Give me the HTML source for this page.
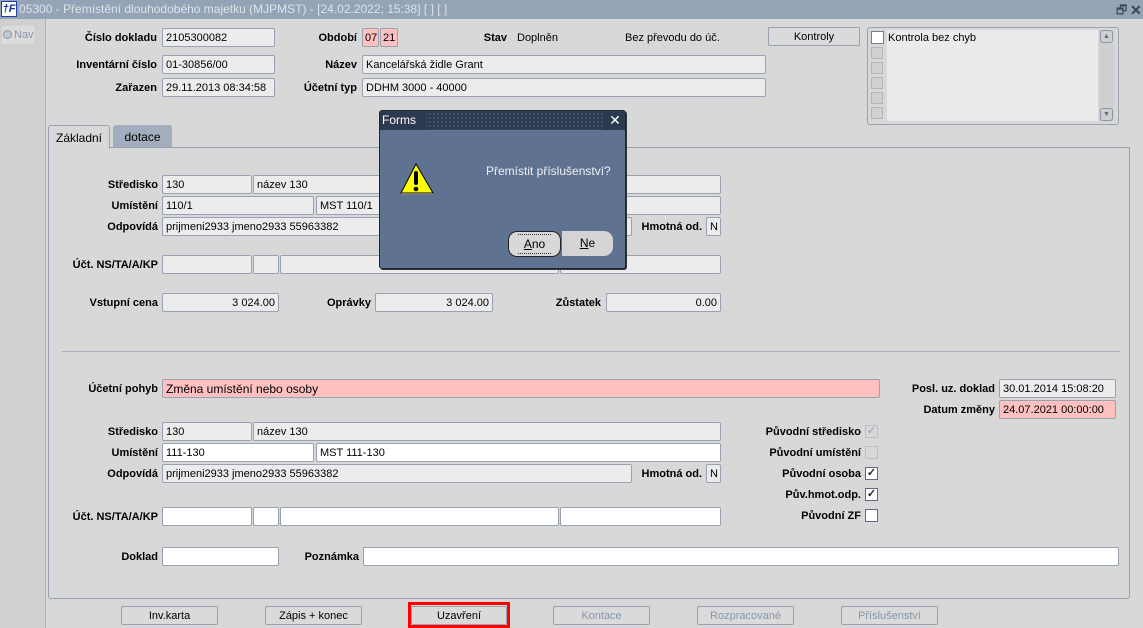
<!DOCTYPE html>
<html><head><meta charset="utf-8">
<style>
*{box-sizing:border-box;margin:0;padding:0}
body{width:1143px;height:628px;overflow:hidden;background:#d8d8d8;font-family:"Liberation Sans",Arial,sans-serif;font-size:11px;color:#000;position:relative}
.a{position:absolute}
.t{position:absolute;height:19px;line-height:20px;white-space:nowrap}
.l{position:absolute;font-weight:bold;font-size:11px;text-align:right;white-space:nowrap;line-height:21px;height:19px}
.f{position:absolute;height:19px;border:1px solid #98a2b0;border-radius:2px;background:#ececec;line-height:18px;padding-left:3px;font-size:11px;white-space:nowrap;overflow:hidden}
.w{background:#fff}
.p{background:#ffc0c0}
.r{text-align:right;padding-right:3px}
.b{position:absolute;height:19px;border:1px solid #98a2b0;border-radius:2px;background:#dadada;text-align:center;line-height:18px;font-size:11px}
.d{color:#8896a8}
.cb{position:absolute;width:13px;height:13px;border:1px solid #5c6b80;background:#fff;font-size:11px;line-height:11px;text-align:center;font-weight:bold}
</style></head><body>
<div class="a" style="left:0;top:0;width:1143px;height:19px;background:#94a3b5"></div>
<div class="a" style="left:1px;top:1px;width:16px;height:16px;background:#fff;border:1px solid #2040a0;color:#1030a0;font-weight:bold;font-style:italic;font-size:11px;line-height:14px;text-align:center">†F</div>
<div class="t" style="left:19px;top:0;color:#dde3ea;font-size:12px;line-height:19px">05300 - Přemístění dlouhodobého majetku (MJPMST) - [24.02.2022; 15:38]  [ ]  [ ]</div>
<div class="t" style="left:1116px;top:0;color:#3a4658;font-size:12px">🗗</div>
<div class="t" style="left:1130px;top:0;color:#3a4658;font-size:14px;font-weight:bold">✕</div>
<div class="a" style="left:0;top:19px;width:46px;height:609px;background:#d0d0d0;border-right:1px solid #a8b0bc"></div>
<div class="a" style="left:2px;top:26px;width:32px;height:18px;background:#dcdcdc"></div>
<div class="a" style="left:3px;top:30px;width:9px;height:9px;border:1px solid #8896a8;border-radius:50%;background:#c0c8d2"></div>
<div class="t" style="left:14px;top:26px;color:#8896a8;font-size:11px;line-height:18px">Nav</div>

<div class="l" style="right:986px;top:28px">Číslo dokladu</div>
<div class="f" style="left:162px;top:28px;width:113px">2105300082</div>
<div class="l" style="right:986px;top:55px">Inventární číslo</div>
<div class="f" style="left:162px;top:55px;width:113px">01-30856/00</div>
<div class="l" style="right:986px;top:78px">Zařazen</div>
<div class="f" style="left:162px;top:78px;width:113px">29.11.2013 08:34:58</div>
<div class="l" style="right:786px;top:28px">Období</div>
<div class="f p" style="left:362px;top:28px;width:17px;padding-left:2px">07</div>
<div class="f p" style="left:380px;top:28px;width:18px;padding-left:2px">21</div>
<div class="l" style="right:636px;top:28px">Stav</div>
<div class="t" style="left:517px;top:28px">Doplněn</div>
<div class="t" style="left:625px;top:28px">Bez převodu do úč.</div>
<div class="b" style="left:768px;top:27px;width:92px">Kontroly</div>
<div class="l" style="right:786px;top:55px">Název</div>
<div class="f" style="left:362px;top:55px;width:404px">Kancelářská židle Grant</div>
<div class="l" style="right:786px;top:78px">Účetní typ</div>
<div class="f" style="left:362px;top:78px;width:404px">DDHM 3000 - 40000</div>
<div class="a" style="left:867px;top:27px;width:252px;height:98px;border:1px solid #98a2b0;border-radius:3px;background:#d8d8d8"></div>
<div class="a" style="left:887px;top:30px;width:211px;height:91px;background:#ebebeb"></div>
<div class="cb" style="left:871px;top:31px;border-color:#6f7e94"></div>
<div class="t" style="left:888px;top:29px;line-height:18px">Kontrola bez chyb</div>
<div class="a" style="left:871px;top:47px;width:12px;height:12px;border:1px solid #aeb6c0;background:#d0d0d0"></div>
<div class="a" style="left:871px;top:62px;width:12px;height:12px;border:1px solid #aeb6c0;background:#d0d0d0"></div>
<div class="a" style="left:871px;top:77px;width:12px;height:12px;border:1px solid #aeb6c0;background:#d0d0d0"></div>
<div class="a" style="left:871px;top:92px;width:12px;height:12px;border:1px solid #aeb6c0;background:#d0d0d0"></div>
<div class="a" style="left:871px;top:107px;width:12px;height:12px;border:1px solid #aeb6c0;background:#d0d0d0"></div>
<div class="a" style="left:1099px;top:30px;width:15px;height:91px;background:#cfcfcf"></div>
<div class="a" style="left:1100px;top:30px;width:13px;height:13px;border:1px solid #8896a8;border-radius:3px;font-size:7px;text-align:center;line-height:11px;color:#5c6b80">▲</div>
<div class="a" style="left:1100px;top:108px;width:13px;height:13px;border:1px solid #8896a8;border-radius:3px;font-size:7px;text-align:center;line-height:11px;color:#5c6b80">▼</div>

<div class="a" style="left:48px;top:147px;width:1082px;height:452px;border:1px solid #98a2b0;border-radius:0 0 3px 3px"></div>
<div class="a" style="left:48px;top:125px;width:62px;height:24px;border:1px solid #98a2b0;border-bottom:none;border-radius:3px 3px 0 0;background:#d8d8d8;font-size:12px;line-height:24px;text-align:center">Základní</div>
<div class="a" style="left:113px;top:125px;width:59px;height:22px;border-radius:3px 3px 0 0;background:#a2adbd;font-size:12px;line-height:24px;text-align:center">dotace</div>
<div class="a" style="left:49px;top:147px;width:60px;height:2px;background:#d8d8d8"></div>

<div class="l" style="right:985px;top:175px">Středisko</div>
<div class="f" style="left:162px;top:175px;width:90px">130</div>
<div class="f" style="left:253px;top:175px;width:468px">název 130</div>
<div class="l" style="right:985px;top:196px">Umístění</div>
<div class="f" style="left:162px;top:196px;width:152px">110/1</div>
<div class="f" style="left:316px;top:196px;width:405px">MST 110/1</div>
<div class="l" style="right:985px;top:217px">Odpovídá</div>
<div class="f" style="left:162px;top:217px;width:470px">prijmeni2933 jmeno2933 55963382</div>
<div class="l" style="right:441px;top:217px">Hmotná od.</div>
<div class="f" style="left:706px;top:217px;width:15px;padding-left:3px">N</div>
<div class="l" style="right:985px;top:255px">Účt. NS/TA/A/KP</div>
<div class="f" style="left:162px;top:255px;width:90px"></div>
<div class="f" style="left:253px;top:255px;width:26px"></div>
<div class="f" style="left:280px;top:255px;width:279px"></div>
<div class="f" style="left:560px;top:255px;width:161px"></div>
<div class="l" style="right:985px;top:293px">Vstupní cena</div>
<div class="f r" style="left:162px;top:293px;width:117px">3 024.00</div>
<div class="l" style="right:772px;top:293px">Oprávky</div>
<div class="f r" style="left:375px;top:293px;width:118px">3 024.00</div>
<div class="l" style="right:542px;top:293px">Zůstatek</div>
<div class="f r" style="left:606px;top:293px;width:115px">0.00</div>
<div class="a" style="left:62px;top:351px;width:1058px;height:1px;background:#a8b0bc"></div>

<div class="l" style="right:985px;top:379px">Účetní pohyb</div>
<div class="f p" style="left:162px;top:379px;width:718px;font-size:12px">Změna umístění nebo osoby</div>
<div class="l" style="right:148px;top:379px">Posl. uz. doklad</div>
<div class="f" style="left:999px;top:379px;width:117px">30.01.2014 15:08:20</div>
<div class="l" style="right:148px;top:400px">Datum změny</div>
<div class="f p" style="left:999px;top:400px;width:117px">24.07.2021 00:00:00</div>
<div class="l" style="right:985px;top:422px">Středisko</div>
<div class="f" style="left:162px;top:422px;width:90px">130</div>
<div class="f" style="left:253px;top:422px;width:468px">název 130</div>
<div class="l" style="right:985px;top:443px">Umístění</div>
<div class="f w" style="left:162px;top:443px;width:152px">111-130</div>
<div class="f w" style="left:316px;top:443px;width:405px">MST 111-130</div>
<div class="l" style="right:985px;top:464px">Odpovídá</div>
<div class="f" style="left:162px;top:464px;width:470px">prijmeni2933 jmeno2933 55963382</div>
<div class="l" style="right:441px;top:464px">Hmotná od.</div>
<div class="f" style="left:706px;top:464px;width:15px;padding-left:3px">N</div>
<div class="l" style="right:985px;top:507px">Účt. NS/TA/A/KP</div>
<div class="f w" style="left:162px;top:507px;width:90px"></div>
<div class="f w" style="left:253px;top:507px;width:26px"></div>
<div class="f w" style="left:280px;top:507px;width:279px"></div>
<div class="f w" style="left:560px;top:507px;width:161px"></div>
<div class="l" style="right:985px;top:547px">Doklad</div>
<div class="f w" style="left:162px;top:547px;width:117px"></div>
<div class="l" style="right:784px;top:547px">Poznámka</div>
<div class="f w" style="left:363px;top:547px;width:756px"></div>

<div class="l" style="right:282px;top:422px">Původní středisko</div>
<div class="cb" style="left:865px;top:425px;border-color:#b8c0ca;background:#d8d8d8;color:#a8b0bc">✓</div>
<div class="l" style="right:282px;top:443px">Původní umístění</div>
<div class="cb" style="left:865px;top:446px;border-color:#b8c0ca;background:#d8d8d8"></div>
<div class="l" style="right:282px;top:464px">Původní osoba</div>
<div class="cb" style="left:865px;top:467px;color:#222">✓</div>
<div class="l" style="right:282px;top:485px">Pův.hmot.odp.</div>
<div class="cb" style="left:865px;top:488px;color:#222">✓</div>
<div class="l" style="right:282px;top:506px">Původní ZF</div>
<div class="cb" style="left:865px;top:509px"></div>

<div class="b" style="left:121px;top:606px;width:97px">Inv.karta</div>
<div class="b" style="left:265px;top:606px;width:97px">Zápis + konec</div>
<div class="a" style="left:408px;top:602px;width:102px;height:26px;border:3px solid #f00"></div>
<div class="b" style="left:411px;top:606px;width:96px">Uzavření</div>
<div class="b d" style="left:553px;top:606px;width:97px">Kontace</div>
<div class="b d" style="left:697px;top:606px;width:97px">Rozpracované</div>
<div class="b d" style="left:841px;top:606px;width:97px">Příslušenství</div>

<div class="a" style="left:379px;top:110px;width:247px;height:159px;background:#5f7291;border:1px solid #1e2835;border-radius:3px;box-shadow:1px 1px 0 #333"></div>
<div class="a" style="left:380px;top:111px;width:245px;height:19px;background:#2c3a50;background-image:radial-gradient(#7f8ca0 0.6px,transparent 0.8px);background-size:4px 4px;background-position:0 1px"></div>
<div class="a" style="left:380px;top:111px;width:46px;height:19px;background:#2c3a50;color:#fff;font-size:12px;line-height:19px;padding-left:2px">Forms</div>
<div class="a" style="left:605px;top:111px;width:20px;height:19px;background:#2c3a50;color:#fff;font-size:14px;line-height:19px;text-align:center">✕</div>
<svg class="a" style="left:400px;top:162px" width="53" height="34" viewBox="0 0 53 34"><polygon points="16,2 33,31 1,31" fill="#ffff00" stroke="#000" stroke-width="1"/><polygon points="1,31 33,31 34,33 2,33" fill="#777"/><rect x="14" y="9" width="4" height="14" rx="2" fill="#000"/><circle cx="16" cy="27" r="2.3" fill="#000"/></svg>
<div class="t" style="left:486px;top:161px;color:#f0f0f0;font-size:12px">Přemístit příslušenství?</div>
<div class="a" style="left:508px;top:231px;width:53px;height:26px;border:1px solid #222;border-radius:9px;background:#d8d8d8;text-align:center;font-size:12px;line-height:24px"><span style="border-top:1px dotted #333;border-bottom:1px dotted #333;padding:2px 6px"><u>A</u>no</span></div>
<div class="a" style="left:562px;top:231px;width:51px;height:25px;border-radius:0 9px 9px 0;background:#d4d4d4;text-align:center;font-size:12px;line-height:24px"><u>N</u>e</div>
</body></html>
